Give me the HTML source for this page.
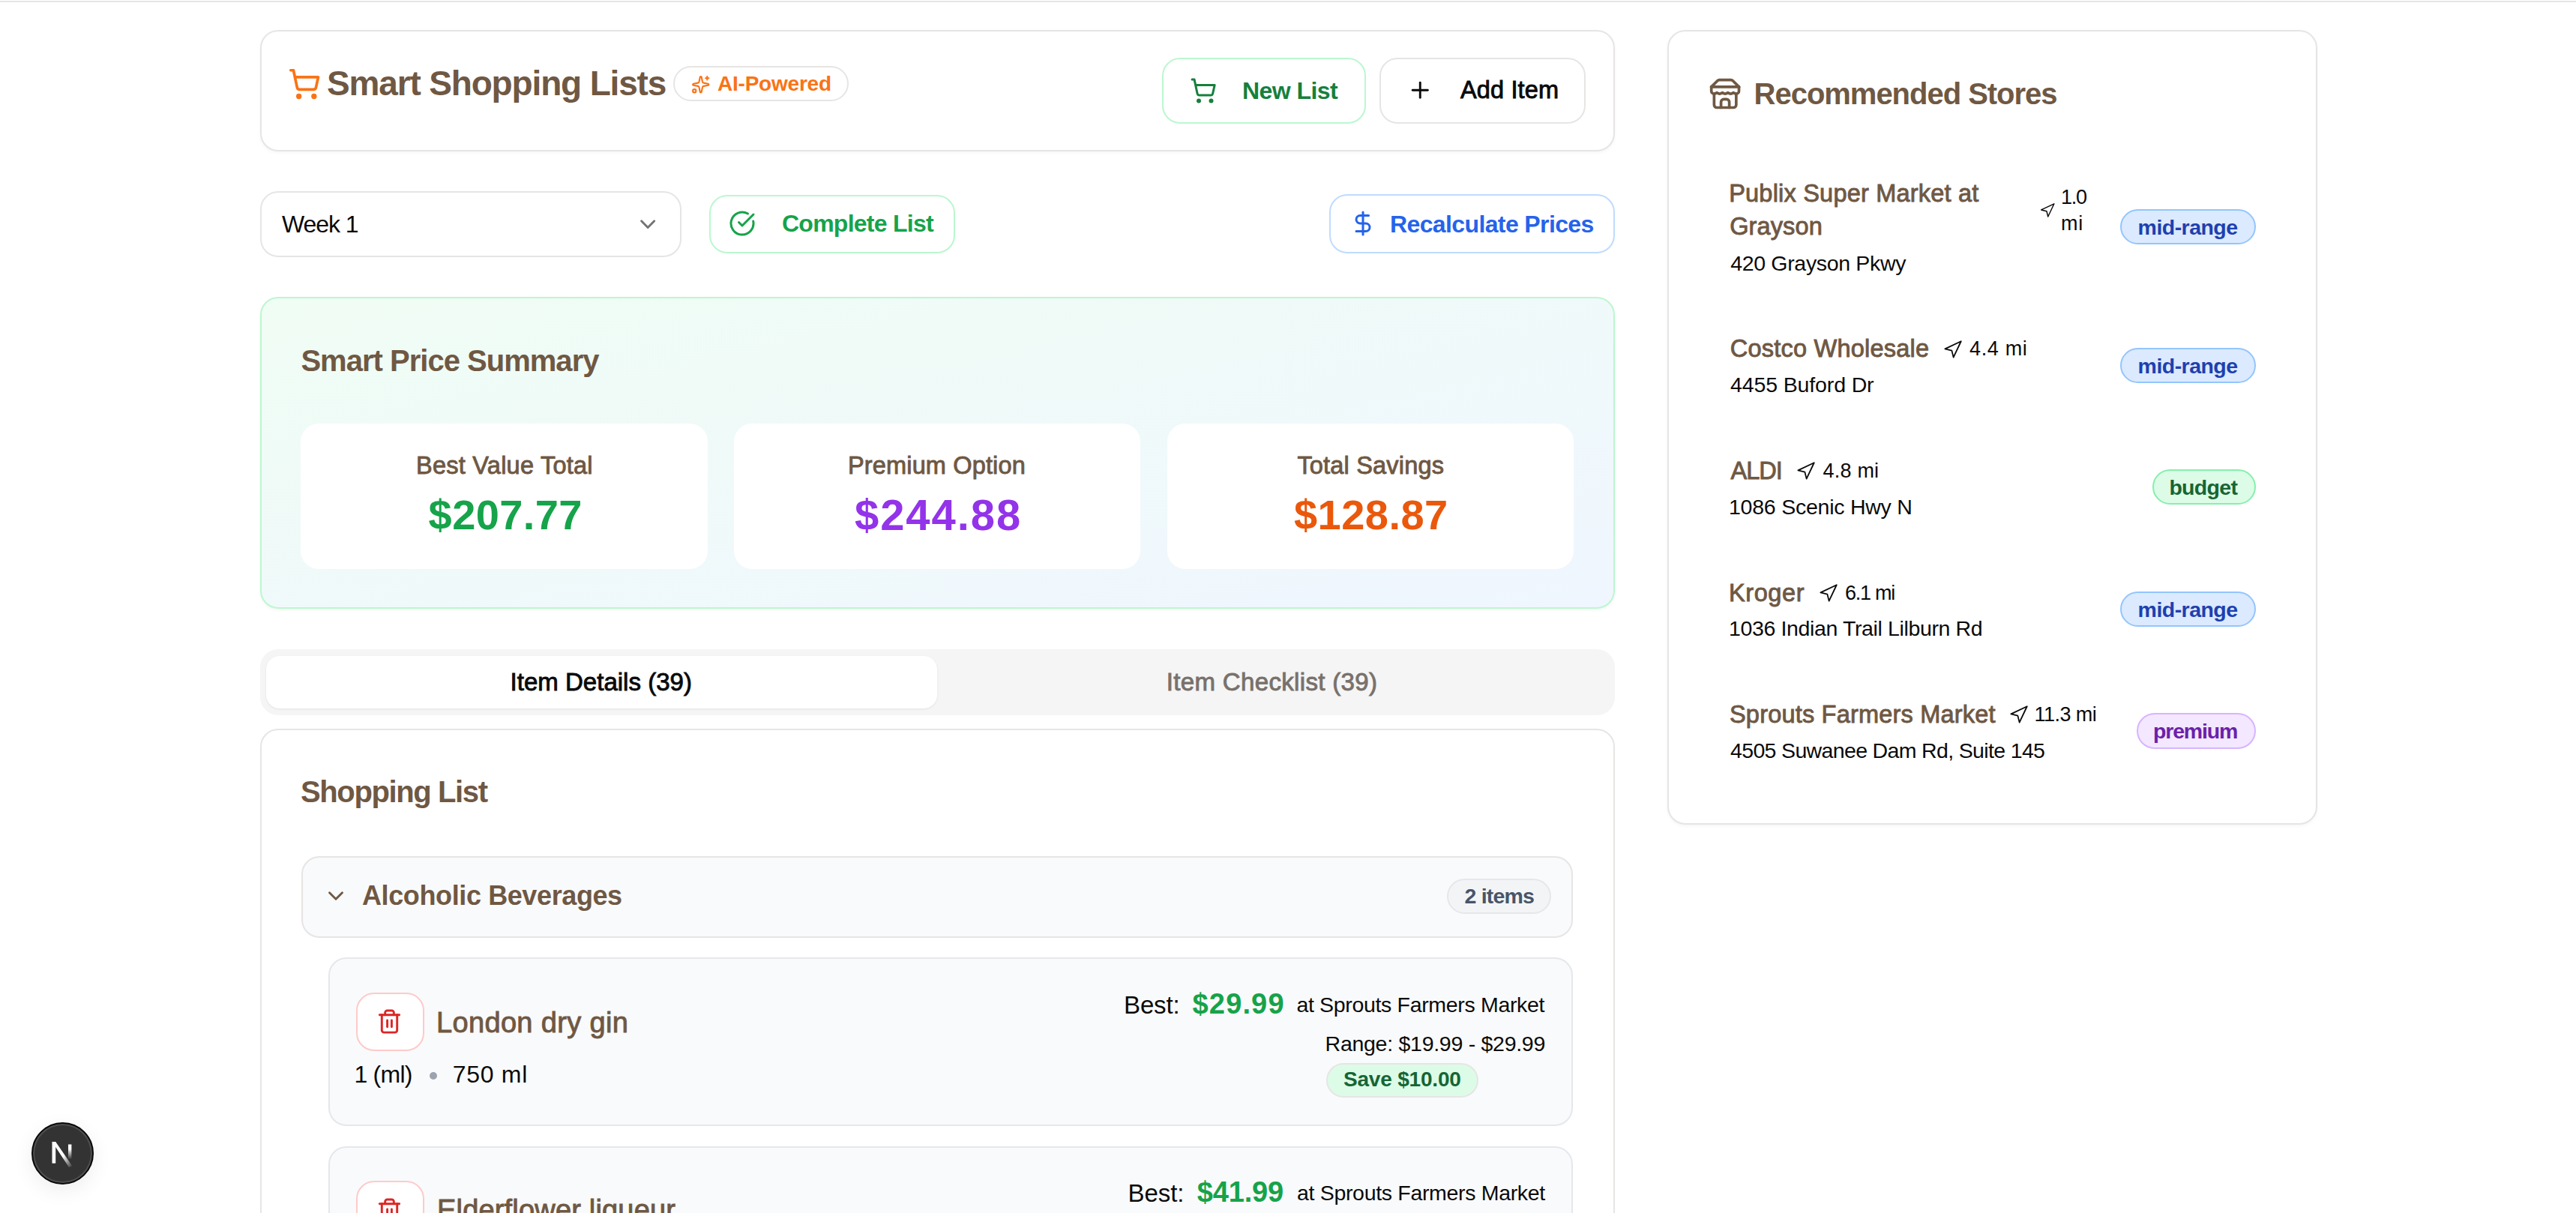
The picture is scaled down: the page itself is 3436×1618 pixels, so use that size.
<!DOCTYPE html>
<html><head><meta charset="utf-8"><style>
html,body{margin:0;padding:0;background:#fff;width:3436px;height:1618px;overflow:hidden;position:relative}
.t{position:absolute;white-space:nowrap;font-family:"Liberation Sans", sans-serif}
@media (max-width: 2400px) { html{zoom:0.5} }
</style></head><body>
<div style="position:absolute;left:0;top:1px;width:3436px;height:2px;background:#e7e5e4"></div>
<div style="position:absolute;left:347px;top:40px;width:1807px;height:162px;box-sizing:border-box;border:2px solid #e7e5e4;background:#fff;border-radius:24px;box-shadow:0 2px 4px rgba(0,0,0,0.04)"></div>
<svg style="position:absolute;left:384px;top:90px" width="44" height="44" viewBox="0 0 24 24" fill="none" stroke="#f97316" stroke-width="2" stroke-linecap="round" stroke-linejoin="round" ><circle cx="8" cy="21" r="1"/><circle cx="19" cy="21" r="1"/><path d="M2.05 2.05h2l2.66 12.42a2 2 0 0 0 2 1.58h9.78a2 2 0 0 0 1.95-1.57l1.65-7.43H5.12"/></svg>
<div style="position:absolute;left:898px;top:88px;width:234px;height:47px;box-sizing:border-box;border:2px solid #e7e5e4;background:#fff;border-radius:30px;"></div>
<svg style="position:absolute;left:922.25px;top:99.75px" width="25.5" height="25.5" viewBox="0 0 24 24" fill="none" stroke="#f97316" stroke-width="2" stroke-linecap="round" stroke-linejoin="round" ><path d="M11.017 2.814a1 1 0 0 1 1.966 0l1.051 5.558a2 2 0 0 0 1.594 1.594l5.558 1.051a1 1 0 0 1 0 1.966l-5.558 1.051a2 2 0 0 0-1.594 1.594l-1.051 5.558a1 1 0 0 1-1.966 0l-1.051-5.558a2 2 0 0 0-1.594-1.594l-5.558-1.051a1 1 0 0 1 0-1.966l5.558-1.051a2 2 0 0 0 1.594-1.594z"/><path d="M20 2v4"/><path d="M22 4h-4"/><circle cx="4" cy="20" r="2"/></svg>
<div style="position:absolute;left:1550px;top:77px;width:272px;height:88px;box-sizing:border-box;border:2px solid #bbf7d0;background:#fff;border-radius:24px;"></div>
<svg style="position:absolute;left:1587px;top:102.5px" width="36" height="36" viewBox="0 0 24 24" fill="none" stroke="#15803d" stroke-width="2" stroke-linecap="round" stroke-linejoin="round" ><circle cx="8" cy="21" r="1"/><circle cx="19" cy="21" r="1"/><path d="M2.05 2.05h2l2.66 12.42a2 2 0 0 0 2 1.58h9.78a2 2 0 0 0 1.95-1.57l1.65-7.43H5.12"/></svg>
<div style="position:absolute;left:1840px;top:77px;width:275px;height:88px;box-sizing:border-box;border:2px solid #e7e5e4;background:#fff;border-radius:24px;"></div>
<svg style="position:absolute;left:1877.25px;top:103.25px" width="34.5" height="34.5" viewBox="0 0 24 24" fill="none" stroke="#0a0a0a" stroke-width="2" stroke-linecap="round" stroke-linejoin="round" ><path d="M5 12h14"/><path d="M12 5v14"/></svg>
<div style="position:absolute;left:347px;top:255px;width:562px;height:88px;box-sizing:border-box;border:2px solid #e7e5e4;background:#fff;border-radius:24px;"></div>
<svg style="position:absolute;left:846.85px;top:281.65px" width="34.3" height="34.3" viewBox="0 0 24 24" fill="none" stroke="#737373" stroke-width="2" stroke-linecap="round" stroke-linejoin="round" ><path d="m6 9 6 6 6-6"/></svg>
<div style="position:absolute;left:946px;top:260px;width:328px;height:78px;box-sizing:border-box;border:2px solid #bbf7d0;background:#fff;border-radius:24px;"></div>
<svg style="position:absolute;left:972px;top:280px" width="36" height="36" viewBox="0 0 24 24" fill="none" stroke="#16a34a" stroke-width="2" stroke-linecap="round" stroke-linejoin="round" ><path d="M21.801 10A10 10 0 1 1 17 3.335"/><path d="m9 11 3 3L22 4"/></svg>
<div style="position:absolute;left:1773px;top:259px;width:381px;height:79px;box-sizing:border-box;border:2px solid #bfdbfe;background:#fff;border-radius:24px;"></div>
<svg style="position:absolute;left:1800px;top:280px" width="36" height="36" viewBox="0 0 24 24" fill="none" stroke="#2563eb" stroke-width="2" stroke-linecap="round" stroke-linejoin="round" ><line x1="12" x2="12" y1="2" y2="22"/><path d="M17 5H9.5a3.5 3.5 0 0 0 0 7h5a3.5 3.5 0 0 1 0 7H6"/></svg>
<div style="position:absolute;left:347px;top:396px;width:1807px;height:416px;box-sizing:border-box;border:2px solid #bbf7d0;background:linear-gradient(to bottom right,#f0fdf4,#eff6ff);border-radius:24px;box-shadow:0 2px 4px rgba(0,0,0,0.04)"></div>
<div style="position:absolute;left:401px;top:565px;width:543px;height:194px;box-sizing:border-box;border:0px solid #e7e5e4;background:#fff;border-radius:24px;"></div>
<div style="position:absolute;left:979px;top:565px;width:542px;height:194px;box-sizing:border-box;border:0px solid #e7e5e4;background:#fff;border-radius:24px;"></div>
<div style="position:absolute;left:1557px;top:565px;width:542px;height:194px;box-sizing:border-box;border:0px solid #e7e5e4;background:#fff;border-radius:24px;"></div>
<div style="position:absolute;left:347px;top:866px;width:1807px;height:88px;box-sizing:border-box;border:0px solid #e7e5e4;background:#f5f5f5;border-radius:24px;"></div>
<div style="position:absolute;left:355px;top:875px;width:895px;height:70px;box-sizing:border-box;border:0px solid #e7e5e4;background:#fff;border-radius:18px;box-shadow:0 1px 3px rgba(0,0,0,0.08)"></div>
<div style="position:absolute;left:347px;top:972px;width:1807px;height:728px;box-sizing:border-box;border:2px solid #e7e5e4;background:#fff;border-radius:24px;"></div>
<div style="position:absolute;left:402px;top:1142px;width:1696px;height:109px;box-sizing:border-box;border:2px solid #e7e5e4;background:#f9fafb;border-radius:24px;"></div>
<svg style="position:absolute;left:430.5px;top:1178.2px" width="34" height="34" viewBox="0 0 24 24" fill="none" stroke="#6f5843" stroke-width="2" stroke-linecap="round" stroke-linejoin="round" ><path d="m6 9 6 6 6-6"/></svg>
<div style="position:absolute;left:1930px;top:1172px;width:139px;height:47px;box-sizing:border-box;border:2px solid #e5e7eb;background:#f3f4f6;border-radius:30px;"></div>
<div style="position:absolute;left:438px;top:1277px;width:1660px;height:225px;box-sizing:border-box;border:2px solid #e5e7eb;background:#f9fafb;border-radius:24px;"></div>
<div style="position:absolute;left:475px;top:1324px;width:91px;height:78px;box-sizing:border-box;border:2px solid #fecaca;background:#fff;border-radius:24px;"></div>
<svg style="position:absolute;left:502px;top:1345px" width="35" height="35" viewBox="0 0 24 24" fill="none" stroke="#dc2626" stroke-width="2" stroke-linecap="round" stroke-linejoin="round" ><path d="M10 11v6"/><path d="M14 11v6"/><path d="M19 6v14a2 2 0 0 1-2 2H7a2 2 0 0 1-2-2V6"/><path d="M3 6h18"/><path d="M8 6V4a2 2 0 0 1 2-2h4a2 2 0 0 1 2 2v2"/></svg>
<div style="position:absolute;left:573px;top:1429.5px;width:10px;height:10px;border-radius:5px;background:#9ca3af"></div>
<div style="position:absolute;left:1769px;top:1418px;width:203px;height:46px;box-sizing:border-box;border:2px solid #e7e5e4;background:#dcfce7;border-radius:30px;"></div>
<div style="position:absolute;left:438px;top:1529px;width:1660px;height:271px;box-sizing:border-box;border:2px solid #e5e7eb;background:#f9fafb;border-radius:24px;"></div>
<div style="position:absolute;left:475px;top:1575px;width:91px;height:78px;box-sizing:border-box;border:2px solid #fecaca;background:#fff;border-radius:24px;"></div>
<svg style="position:absolute;left:502px;top:1597px" width="35" height="35" viewBox="0 0 24 24" fill="none" stroke="#dc2626" stroke-width="2" stroke-linecap="round" stroke-linejoin="round" ><path d="M10 11v6"/><path d="M14 11v6"/><path d="M19 6v14a2 2 0 0 1-2 2H7a2 2 0 0 1-2-2V6"/><path d="M3 6h18"/><path d="M8 6V4a2 2 0 0 1 2-2h4a2 2 0 0 1 2 2v2"/></svg>
<div style="position:absolute;left:2224px;top:40px;width:867px;height:1060px;box-sizing:border-box;border:2px solid #e7e5e4;background:#fff;border-radius:24px;box-shadow:0 2px 4px rgba(0,0,0,0.04)"></div>
<svg style="position:absolute;left:2279px;top:102.85px" width="44.2" height="44.2" viewBox="0 0 24 24" fill="none" stroke="#6f5843" stroke-width="2" stroke-linecap="round" stroke-linejoin="round" ><path d="m2 7 4.41-4.41A2 2 0 0 1 7.83 2h8.34a2 2 0 0 1 1.42.59L22 7"/><path d="M4 12v8a2 2 0 0 0 2 2h12a2 2 0 0 0 2-2v-8"/><path d="M15 22v-4a2 2 0 0 0-2-2h-2a2 2 0 0 0-2 2v4"/><path d="M2 7h20"/><path d="M22 7v3a2 2 0 0 1-2 2a2.7 2.7 0 0 1-1.59-.63.7.7 0 0 0-.82 0A2.7 2.7 0 0 1 16 12a2.7 2.7 0 0 1-1.59-.63.7.7 0 0 0-.82 0A2.7 2.7 0 0 1 12 12a2.7 2.7 0 0 1-1.59-.63.7.7 0 0 0-.82 0A2.7 2.7 0 0 1 8 12a2.7 2.7 0 0 1-1.59-.63.7.7 0 0 0-.82 0A2.7 2.7 0 0 1 4 12a2 2 0 0 1-2-2V7"/></svg>
<svg style="position:absolute;left:2719.95px;top:270.45px" width="21.7" height="21.7" viewBox="0 0 24 24" fill="none" stroke="#0a0a0a" stroke-width="1.6" stroke-linecap="round" stroke-linejoin="round" ><polygon points="3 11 22 2 13 21 11 13 3 11"/></svg>
<svg style="position:absolute;left:2590.64px;top:452.71px" width="27" height="27" viewBox="0 0 24 24" fill="none" stroke="#0a0a0a" stroke-width="1.6" stroke-linecap="round" stroke-linejoin="round" ><polygon points="3 11 22 2 13 21 11 13 3 11"/></svg>
<svg style="position:absolute;left:2394.59px;top:614.51px" width="27" height="27" viewBox="0 0 24 24" fill="none" stroke="#0a0a0a" stroke-width="1.6" stroke-linecap="round" stroke-linejoin="round" ><polygon points="3 11 22 2 13 21 11 13 3 11"/></svg>
<svg style="position:absolute;left:2424.69px;top:778.26px" width="27" height="27" viewBox="0 0 24 24" fill="none" stroke="#0a0a0a" stroke-width="1.6" stroke-linecap="round" stroke-linejoin="round" ><polygon points="3 11 22 2 13 21 11 13 3 11"/></svg>
<svg style="position:absolute;left:2679.44px;top:939.86px" width="27" height="27" viewBox="0 0 24 24" fill="none" stroke="#0a0a0a" stroke-width="1.6" stroke-linecap="round" stroke-linejoin="round" ><polygon points="3 11 22 2 13 21 11 13 3 11"/></svg>
<div style="position:absolute;left:2828px;top:279px;width:181px;height:47px;box-sizing:border-box;border:2px solid #93c5fd;background:#dbeafe;border-radius:30px;"></div>
<div style="position:absolute;left:2828px;top:464px;width:181px;height:47px;box-sizing:border-box;border:2px solid #93c5fd;background:#dbeafe;border-radius:30px;"></div>
<div style="position:absolute;left:2871px;top:626px;width:138px;height:47px;box-sizing:border-box;border:2px solid #86efac;background:#dcfce7;border-radius:30px;"></div>
<div style="position:absolute;left:2828px;top:789px;width:181px;height:47px;box-sizing:border-box;border:2px solid #93c5fd;background:#dbeafe;border-radius:30px;"></div>
<div style="position:absolute;left:2850px;top:951px;width:159px;height:48px;box-sizing:border-box;border:2px solid #d8b4fe;background:#f3e8ff;border-radius:30px;"></div>
<div style="position:absolute;left:42px;top:1497px;width:83px;height:83px;border-radius:50%;background:#333;box-sizing:border-box;border:2px solid #0a0a0a;box-shadow:inset 0 0 0 2px rgba(255,255,255,0.14), 0 8px 28px rgba(0,0,0,0.07)"></div>
<svg style="position:absolute;left:69px;top:1522px" width="30" height="36" viewBox="0 0 30 36"><defs><linearGradient id="ng1" x1="0" y1="0" x2="1" y2="1"><stop offset="0.55" stop-color="#fff"/><stop offset="1" stop-color="#fff" stop-opacity="0"/></linearGradient><linearGradient id="ng2" x1="0" y1="0" x2="0" y2="1"><stop offset="0.3" stop-color="#fff"/><stop offset="1" stop-color="#fff" stop-opacity="0"/></linearGradient></defs><rect x="0.5" y="1" width="4.7" height="28.7" fill="#fff"/><polygon points="0.5,1 5.2,1 27.5,33.5 23,35" fill="url(#ng1)"/><rect x="22" y="4.5" width="4.4" height="20" fill="url(#ng2)"/></svg>
<div id="t_title" class="t" style="left:436.00px;top:88.30px;font-size:46px;line-height:46px;font-weight:700;color:#6f5843;letter-spacing:-1.158px">Smart Shopping Lists</div>
<div id="t_ai" class="t" style="left:957.00px;top:98.40px;font-size:28px;line-height:28px;font-weight:700;color:#f97316;letter-spacing:-0.222px">AI-Powered</div>
<div id="t_newlist" class="t" style="left:1657.00px;top:104.50px;font-size:32px;line-height:32px;font-weight:700;color:#15803d;letter-spacing:-0.571px">New List</div>
<div id="t_additem" class="t" style="left:1948.00px;top:104.38px;font-size:32.5px;line-height:32.5px;font-weight:400;color:#0a0a0a;-webkit-text-stroke:0.9px #0a0a0a;letter-spacing:0.143px">Add Item</div>
<div id="t_week" class="t" style="left:376.00px;top:282.80px;font-size:32px;line-height:32px;font-weight:400;color:#0a0a0a;letter-spacing:-1.080px">Week 1</div>
<div id="t_complete" class="t" style="left:1043.00px;top:282.40px;font-size:32px;line-height:32px;font-weight:700;color:#16a34a;letter-spacing:-0.750px">Complete List</div>
<div id="t_recalc" class="t" style="left:1854.00px;top:282.80px;font-size:32px;line-height:32px;font-weight:700;color:#2563eb;letter-spacing:-0.618px">Recalculate Prices</div>
<div id="t_sum" class="t" style="left:401.40px;top:461.40px;font-size:40px;line-height:40px;font-weight:700;color:#6f5843;letter-spacing:-0.983px">Smart Price Summary</div>
<div id="t_bvt" class="t" style="left:555.00px;top:605.27px;font-size:32.5px;line-height:32.5px;font-weight:400;color:#6f5843;-webkit-text-stroke:0.9px #6f5843;letter-spacing:0.247px">Best Value Total</div>
<div id="t_bv" class="t" style="left:571.60px;top:659.20px;font-size:56px;line-height:56px;font-weight:700;color:#16a34a;letter-spacing:0.400px">$207.77</div>
<div id="t_po" class="t" style="left:1131.00px;top:605.27px;font-size:32.5px;line-height:32.5px;font-weight:400;color:#6f5843;-webkit-text-stroke:0.9px #6f5843;letter-spacing:0.154px">Premium Option</div>
<div id="t_pv" class="t" style="left:1140.00px;top:657.50px;font-size:58px;line-height:58px;font-weight:700;color:#9333ea;letter-spacing:1.917px">$244.88</div>
<div id="t_ts" class="t" style="left:1730.40px;top:605.27px;font-size:32.5px;line-height:32.5px;font-weight:400;color:#6f5843;-webkit-text-stroke:0.9px #6f5843;letter-spacing:0.192px">Total Savings</div>
<div id="t_tv" class="t" style="left:1726.00px;top:659.20px;font-size:56px;line-height:56px;font-weight:700;color:#ea580c;letter-spacing:0.467px">$128.87</div>
<div id="t_tab1" class="t" style="left:680.60px;top:892.95px;font-size:33px;line-height:33px;font-weight:400;color:#0a0a0a;-webkit-text-stroke:0.9px #0a0a0a;letter-spacing:0.013px">Item Details (39)</div>
<div id="t_tab2" class="t" style="left:1555.80px;top:892.95px;font-size:33px;line-height:33px;font-weight:400;color:#78716c;-webkit-text-stroke:0.9px #78716c;letter-spacing:0.339px">Item Checklist (39)</div>
<div id="t_sl" class="t" style="left:401.00px;top:1036.00px;font-size:40px;line-height:40px;font-weight:700;color:#6f5843;letter-spacing:-1.383px">Shopping List</div>
<div id="t_cat" class="t" style="left:483.00px;top:1177.20px;font-size:36px;line-height:36px;font-weight:700;color:#6f5843;letter-spacing:-0.389px">Alcoholic Beverages</div>
<div id="t_2items" class="t" style="left:1953.60px;top:1180.98px;font-size:28.5px;line-height:28.5px;font-weight:700;color:#475569;letter-spacing:-0.833px">2 items</div>
<div id="t_gin" class="t" style="left:582.00px;top:1344.50px;font-size:38px;line-height:38px;font-weight:400;color:#6f5843;-webkit-text-stroke:0.9px #6f5843;letter-spacing:0.338px">London dry gin</div>
<div id="t_qty" class="t" style="left:472.40px;top:1416.80px;font-size:32px;line-height:32px;font-weight:400;color:#0a0a0a;letter-spacing:-0.740px">1 (ml)</div>
<div id="t_750" class="t" style="left:603.80px;top:1416.80px;font-size:32px;line-height:32px;font-weight:400;color:#0a0a0a;letter-spacing:0.680px">750 ml</div>
<div id="t_best1" class="t" style="left:1499.00px;top:1323.75px;font-size:33px;line-height:33px;font-weight:400;color:#0a0a0a;letter-spacing:-0.125px">Best:</div>
<div id="t_p1" class="t" style="left:1590.60px;top:1320.30px;font-size:38px;line-height:38px;font-weight:700;color:#16a34a;letter-spacing:1.140px">$29.99</div>
<div id="t_at1" class="t" style="left:1729.40px;top:1326.38px;font-size:28.5px;line-height:28.5px;font-weight:400;color:#0a0a0a;letter-spacing:-0.329px">at Sprouts Farmers Market</div>
<div id="t_range" class="t" style="left:1767.60px;top:1378.48px;font-size:28.5px;line-height:28.5px;font-weight:400;color:#0a0a0a;letter-spacing:-0.276px">Range: $19.99 - $29.99</div>
<div id="t_save" class="t" style="left:1792.00px;top:1425.90px;font-size:28px;line-height:28px;font-weight:700;color:#166534;letter-spacing:-0.190px">Save $10.00</div>
<div id="t_gin2" class="t" style="left:583.00px;top:1594.70px;font-size:38px;line-height:38px;font-weight:400;color:#6f5843;-webkit-text-stroke:0.9px #6f5843;letter-spacing:0.178px">Elderflower liqueur</div>
<div id="t_best2" class="t" style="left:1504.60px;top:1574.95px;font-size:33px;line-height:33px;font-weight:400;color:#0a0a0a;letter-spacing:-0.100px">Best:</div>
<div id="t_p2" class="t" style="left:1596.80px;top:1571.20px;font-size:38px;line-height:38px;font-weight:700;color:#16a34a;letter-spacing:-0.180px">$41.99</div>
<div id="t_at2" class="t" style="left:1730.00px;top:1577.28px;font-size:28.5px;line-height:28.5px;font-weight:400;color:#0a0a0a;letter-spacing:-0.321px">at Sprouts Farmers Market</div>
<div id="t_rs" class="t" style="left:2339.60px;top:105.30px;font-size:40px;line-height:40px;font-weight:700;color:#6f5843;letter-spacing:-1.024px">Recommended Stores</div>
<div id="s1_name" class="t" style="left:2306.20px;top:241.88px;font-size:32.5px;line-height:32.5px;font-weight:400;color:#6f5843;-webkit-text-stroke:0.9px #6f5843;letter-spacing:0.210px">Publix Super Market at</div>
<div id="s1_name2" class="t" style="left:2307.20px;top:286.27px;font-size:32.5px;line-height:32.5px;font-weight:400;color:#6f5843;-webkit-text-stroke:0.9px #6f5843;letter-spacing:0.117px">Grayson</div>
<div id="s1_d1" class="t" style="left:2749.00px;top:249.95px;font-size:27px;line-height:27px;font-weight:400;color:#0a0a0a;letter-spacing:-1.250px">1.0</div>
<div id="s1_d2" class="t" style="left:2749.00px;top:284.85px;font-size:27px;line-height:27px;font-weight:400;color:#0a0a0a;letter-spacing:0.800px">mi</div>
<div id="s1_addr" class="t" style="left:2308.20px;top:337.07px;font-size:28.5px;line-height:28.5px;font-weight:400;color:#0a0a0a;letter-spacing:-0.327px">420 Grayson Pkwy</div>
<div id="s1_badge" class="t" style="left:2851.60px;top:288.77px;font-size:28.5px;line-height:28.5px;font-weight:700;color:#1e40af;letter-spacing:-0.538px">mid-range</div>
<div id="s2_name" class="t" style="left:2307.80px;top:449.07px;font-size:32.5px;line-height:32.5px;font-weight:400;color:#6f5843;-webkit-text-stroke:0.9px #6f5843;letter-spacing:0.227px">Costco Wholesale</div>
<div id="s2_d" class="t" style="left:2627.00px;top:452.05px;font-size:27px;line-height:27px;font-weight:400;color:#0a0a0a;letter-spacing:0.660px">4.4 mi</div>
<div id="s2_addr" class="t" style="left:2308.00px;top:499.27px;font-size:28.5px;line-height:28.5px;font-weight:400;color:#0a0a0a;letter-spacing:-0.131px">4455 Buford Dr</div>
<div id="s2_badge" class="t" style="left:2851.60px;top:473.77px;font-size:28.5px;line-height:28.5px;font-weight:700;color:#1e40af;letter-spacing:-0.538px">mid-range</div>
<div id="s3_name" class="t" style="left:2308.60px;top:611.67px;font-size:32.5px;line-height:32.5px;font-weight:400;color:#6f5843;-webkit-text-stroke:0.9px #6f5843;letter-spacing:-1.000px">ALDI</div>
<div id="s3_d" class="t" style="left:2431.60px;top:615.05px;font-size:27px;line-height:27px;font-weight:400;color:#0a0a0a;letter-spacing:0.200px">4.8 mi</div>
<div id="s3_addr" class="t" style="left:2306.00px;top:661.77px;font-size:28.5px;line-height:28.5px;font-weight:400;color:#0a0a0a;letter-spacing:-0.238px">1086 Scenic Hwy N</div>
<div id="s3_badge" class="t" style="left:2893.40px;top:635.77px;font-size:28.5px;line-height:28.5px;font-weight:700;color:#166534;letter-spacing:-0.680px">budget</div>
<div id="s4_name" class="t" style="left:2306.00px;top:774.98px;font-size:32.5px;line-height:32.5px;font-weight:400;color:#6f5843;-webkit-text-stroke:0.9px #6f5843;letter-spacing:0.600px">Kroger</div>
<div id="s4_d" class="t" style="left:2461.00px;top:778.05px;font-size:27px;line-height:27px;font-weight:400;color:#0a0a0a;letter-spacing:-1.280px">6.1 mi</div>
<div id="s4_addr" class="t" style="left:2306.00px;top:823.77px;font-size:28.5px;line-height:28.5px;font-weight:400;color:#0a0a0a;letter-spacing:-0.367px">1036 Indian Trail Lilburn Rd</div>
<div id="s4_badge" class="t" style="left:2851.60px;top:798.77px;font-size:28.5px;line-height:28.5px;font-weight:700;color:#1e40af;letter-spacing:-0.538px">mid-range</div>
<div id="s5_name" class="t" style="left:2307.00px;top:936.58px;font-size:32.5px;line-height:32.5px;font-weight:400;color:#6f5843;-webkit-text-stroke:0.9px #6f5843;letter-spacing:0.195px">Sprouts Farmers Market</div>
<div id="s5_d" class="t" style="left:2713.60px;top:940.05px;font-size:27px;line-height:27px;font-weight:400;color:#0a0a0a;letter-spacing:-0.567px">11.3 mi</div>
<div id="s5_addr" class="t" style="left:2308.00px;top:986.57px;font-size:28.5px;line-height:28.5px;font-weight:400;color:#0a0a0a;letter-spacing:-0.652px">4505 Suwanee Dam Rd, Suite 145</div>
<div id="s5_badge" class="t" style="left:2872.00px;top:960.77px;font-size:28.5px;line-height:28.5px;font-weight:700;color:#6b21a8;letter-spacing:-1.167px">premium</div>
</body></html>
